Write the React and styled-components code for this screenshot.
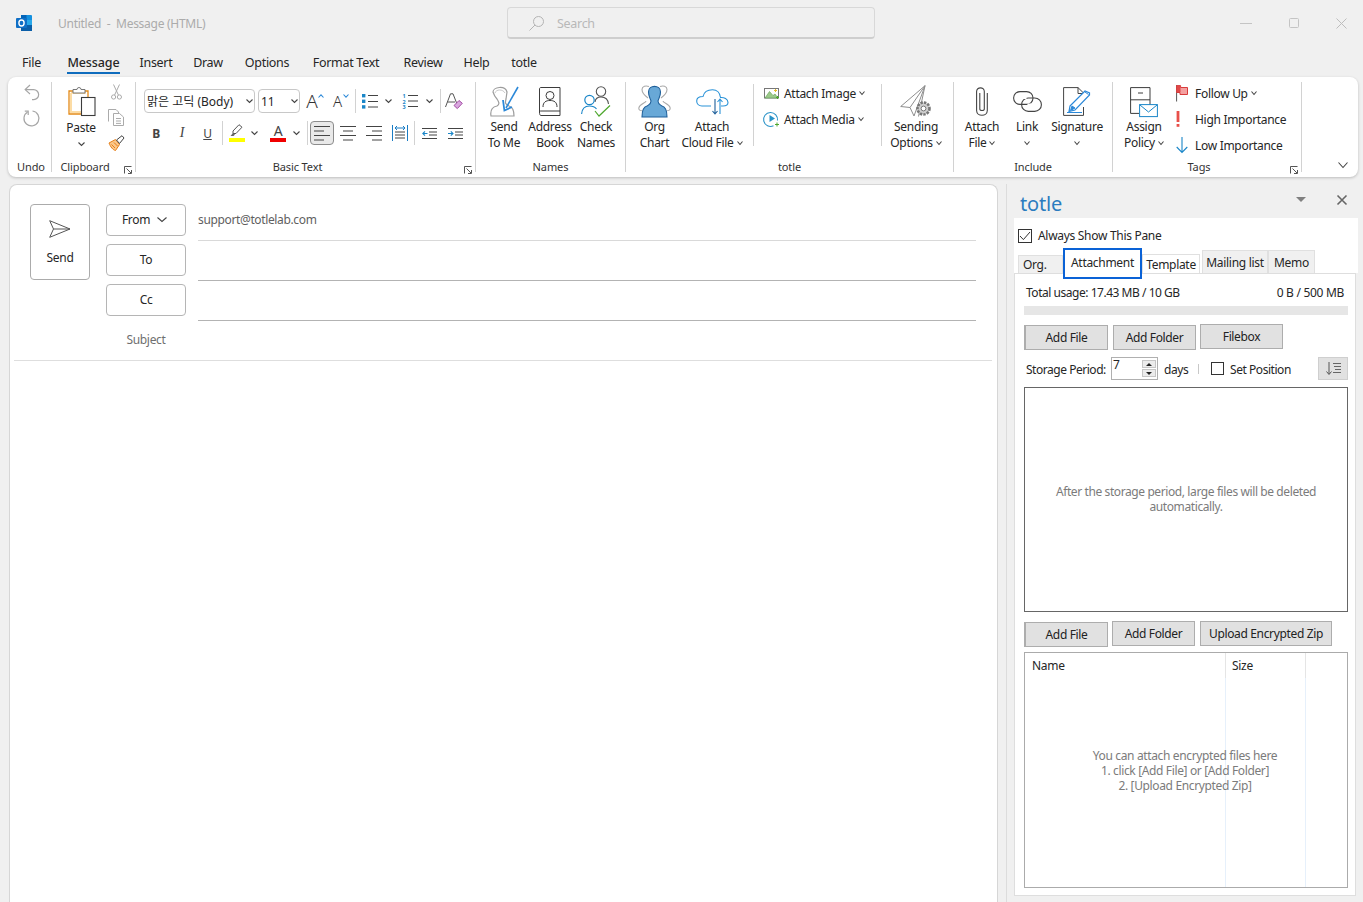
import React from 'react';
import styled, { createGlobalStyle } from 'styled-components';

const FONT = `"Noto Sans", "Noto Sans CJK KR", sans-serif`;

const Global = createGlobalStyle`
  html, body { margin: 0; padding: 0; height: 100%; overflow: hidden; background: #f0f0f0; }
  body { font-family: ${FONT}; font-size: 12px; letter-spacing: -0.3px; color: #262626; }
  * { box-sizing: border-box; }
  svg { display: block; flex: none; overflow: visible; }
`;

const Page = styled.div`width: 1363px; height: 902px; overflow: hidden; display: flex; flex-direction: column; background: #f0f0f0;`;

/* Title bar */
const TitleBar = styled.div`height: 47px; flex: none; display: flex; align-items: center; padding-left: 16px; padding-bottom: 1px;`;
const TitleLeft = styled.div`width: 491px; display: flex; align-items: center; gap: 26px;`;
const TitleText = styled.span`color: #ababab; white-space: pre; font-size: 12px; letter-spacing: -0.27px;`;
const SearchBox = styled.div`
  width: 368px; height: 32px; display: flex; align-items: center; gap: 13px; padding: 1px 0 0 21px;
  border: 1px solid #d8d8d8; border-bottom: 2px solid #cecece; border-radius: 4px; background: #f0f0f0; color: #b8b8b8; font-size: 12.5px;
`;
const WinControls = styled.div`margin-left: 365px; display: flex; align-items: center; gap: 37px;`;

/* Tabs */
const MenuBar = styled.div`height: 30px; flex: none; display: flex; padding-left: 10px; align-items: flex-start;`;
const MenuTab = styled.div`width: ${p => p.$w}px; display: flex; justify-content: center; font-size: 12.5px; color: #262626; padding-top: 7px;`;
const MenuLabel = styled.span`
  display: block; height: 20px; line-height: 18px; white-space: nowrap;
  font-weight: ${p => p.$active ? 500 : 400}; letter-spacing: ${p => p.$active ? '-0.1px' : '-0.3px'};
  border-bottom: 2px solid ${p => p.$active ? '#0f6cbd' : 'transparent'};
`;

/* Ribbon */
const Ribbon = styled.div`
  height: 100px; flex: none; margin: 0 5px 0 8px; padding: 5px 0; display: flex; background: #fff; border-radius: 8px;
  box-shadow: 0 1px 3px rgba(0,0,0,.22);
`;
const Group = styled.div`
  width: ${p => p.$w}px; flex: none; position: relative; display: flex; flex-direction: column;
  border-right: ${p => p.$plain ? 'none' : '1px solid #d2d2d2'};
`;
const GroupBody = styled.div`flex: 1; min-height: 0; display: flex; padding: 2px 0 0 ${p => p.$pl || 0}px; align-items: flex-start;`;
const GroupLabel = styled.div`
  height: 16px; line-height: 16px; margin-bottom: -3px; text-align: center; font-size: 11px; color: #333; white-space: nowrap; letter-spacing: -0.1px;
  padding: 0 ${p => p.$pr || 0}px 0 ${p => p.$pl || 0}px;
`;
const Launcher = styled.span`position: absolute; right: ${p => p.$r}px; bottom: -2px;`;
const LargeBtn = styled.div`
  width: ${p => p.$w}px; flex: none; display: flex; flex-direction: column; align-items: center; text-align: center; line-height: 16px; white-space: nowrap;
`;
const LargeIcon = styled.div`height: 35px; width: 100%; display: flex; justify-content: center; align-items: center;`;
const LargeText = styled.div`display: block; padding-top: ${p => p.$pt || 0}px;`;
const Caret = styled.span`display: inline-block; vertical-align: 2px; margin-left: 3px;`;
const CaretLine = styled.div`height: ${p => p.$h || 16}px; display: flex; align-items: center; justify-content: center;`;
const VSep = styled.div`width: 1px; height: ${p => p.$h}px; flex: none; background: #d2d2d2; margin: 0 ${p => p.$mr || 0}px 0 ${p => p.$ml || 0}px;`;
const SmallList = styled.div`display: flex; flex-direction: column; gap: 2px; width: ${p => p.$w}px; flex: none; padding-left: ${p => p.$pl}px; margin-top: -3px;`;
const SmallRow = styled.div`height: 24px; display: flex; align-items: center; white-space: nowrap;`;
const SmallIcon = styled.span`width: ${p => p.$w}px; flex: none; display: flex;`;
const ToolCol = styled.div`display: flex; flex-direction: column; align-items: center; gap: ${p => p.$gap || 8}px; width: ${p => p.$w}px; flex: none; margin-left: ${p => p.$ml || 0}px;`;
const ToolStack = styled.div`display: flex; flex-direction: column; width: 100%;`;
const ToolRow = styled.div`display: flex; align-items: center; height: ${p => p.$h}px; margin-top: ${p => p.$mt || 0}px; padding-left: ${p => p.$pl || 0}px;`;
const Combo = styled.div`
  width: ${p => p.$w}px; height: 24px; flex: none; display: flex; align-items: center; justify-content: space-between;
  padding: 0 1px 0 2px; margin-right: ${p => p.$mr || 0}px; border: 1px solid #c8c8c8; border-radius: 4px; white-space: nowrap; font-size: 12px; letter-spacing: 0;
`;
const Tool = styled.div`
  width: ${p => p.$w}px; height: 24px; flex: none; display: flex; align-items: center; gap: ${p => p.$gap || 0}px;
  justify-content: ${p => p.$pl ? 'flex-start' : 'center'}; padding-left: ${p => p.$pl || 0}px; margin-left: ${p => p.$ml || 0}px;
  border: ${p => p.$on ? '1px solid #8c8c8c' : 'none'}; border-radius: ${p => p.$on ? 4 : 0}px; background: ${p => p.$on ? '#e9e9e9' : 'transparent'};
`;
const FontA = styled.span`font-size: ${p => p.$s}px; line-height: 1; font-weight: 300; color: #333;`;
const TopDot = styled.span`align-self: flex-start; margin-top: 5px;`;
const FontMark = styled.span`
  font-family: ${p => p.$serif ? '"Liberation Serif", serif' : FONT}; font-size: ${p => p.$serif ? 14 : 12}px; color: #444;
  font-weight: ${p => p.$b ? 700 : 400}; font-style: ${p => p.$i ? 'italic' : 'normal'}; text-decoration: ${p => p.$u ? 'underline' : 'none'};
`;
const ColorBtn = styled.span`display: flex; flex-direction: column; align-items: center; width: 16px; height: 18px; justify-content: space-between;`;
const ColorBar = styled.span`display: block; width: 16px; height: 4px; background: ${p => p.$c};`;
const ColorA = styled.span`font-size: 14px; line-height: 14px; color: #444;`;
const CollapseBtn = styled.div`margin: auto 0 4px 36px;`;

/* Body */
const Body = styled.div`flex: 1; min-height: 0; display: flex; padding: 7px 0 0 9px;`;
const Compose = styled.div`
  width: 989px; flex: none; background: #fff; border: 1px solid #d6d6d6; border-bottom: none; border-radius: 8px 8px 0 0; padding-top: 19px;
`;
const Header = styled.div`display: grid; grid-template-columns: 60px 80px 774px; column-gap: 16px; padding-left: 20px; grid-auto-rows: 40px;`;
const SendBtn = styled.div`
  grid-row: 1 / span 2; height: 76px; border: 1px solid #ababab; border-radius: 4px; display: flex; flex-direction: column; align-items: center; padding-top: 15px; gap: 12px; line-height: 16px;
`;
const AddrBtn = styled.div`
  grid-column: 2; height: 32px; padding-bottom: 1px; border: 1px solid #b5b5b5; border-radius: 4px; display: flex; align-items: center; justify-content: center; gap: 7px; padding-right: ${p => p.$pr || 0}px;
`;
const Field = styled.div`
  grid-column: 3; margin-left: -4px; height: 37px; padding-bottom: 5px; display: flex; align-items: center; color: #5f5f5f; font-size: 12px;
  border-bottom: 1px solid ${p => p.$strong ? '#b3b3b3' : '#d9d9d9'}; letter-spacing: -0.36px;
`;
const SubjectRow = styled.div`grid-column: 2; height: 32px; line-height: 32px; text-align: center; color: #6f6f6f;`;
const ComposeRule = styled.div`height: 1px; background: #dedede; margin: -4px 5px 0 4px;`;

/* Side pane */
const Side = styled.div`flex: 1; min-width: 0; margin-left: 8px; border-left: 1px solid #dcdcdc; padding-left: 7px; display: flex; flex-direction: column;`;
const SideHead = styled.div`height: 34px; flex: none; display: flex; align-items: center; padding-left: 6px;`;
const SideTitle = styled.div`font-size: 20px; color: #2b7cbf; letter-spacing: -0.2px; padding-top: 4px;`;
const SideIcons = styled.div`margin-left: auto; display: flex; align-items: center; gap: 31px; padding-right: 16px; padding-bottom: 3px;`;
const SideTop = styled.div`height: 55px; flex: none; width: 344px; background: #fff; display: flex; flex-direction: column;`;
const AlwaysRow = styled.div`height: 32px; flex: none; display: flex; align-items: center; gap: 6px; padding: 3px 0 0 4px;`;
const Tick = styled.span`width: ${p => p.$s}px; height: ${p => p.$s}px; flex: none; border: 1px solid #333; background: #fff; display: flex; align-items: center; justify-content: center;`;
const TabStrip = styled.div`flex: 1; min-height: 0; display: flex; align-items: flex-end; padding-left: 4px; position: relative; z-index: 2;`;
const PaneTab = styled.div`
  height: ${p => p.$h}px; width: ${p => p.$w}px; flex: none; display: flex; align-items: center; justify-content: ${p => p.$pl ? 'flex-start' : 'center'}; margin-left: ${p => p.$ml || 0}px;
  padding-left: ${p => p.$pl || 0}px; background: ${p => p.$plain ? '#fff' : '#f0f0f0'}; border: 1px solid #e0e0e0; border-bottom: none; white-space: nowrap;
`;
const PaneTabOn = styled.div`
  width: 79px; height: 31px; flex: none; margin-bottom: -6px; padding-bottom: 3px; background: #fff; border: 2px solid #0a62d6; display: flex; align-items: center; justify-content: center; white-space: nowrap;
`;
const PaneBox = styled.div`
  width: 342px; height: 623px; flex: none; background: #fff; border: 1px solid #dedede; padding: 11px 7px 0 9px;
`;
const UsageRow = styled.div`height: 16px; line-height: 16px; display: flex; justify-content: space-between; padding: 0 4px 0 2px;`;
const TightText = styled.span`letter-spacing: -0.47px;`;
const UsageBar = styled.div`height: 9px; margin-top: 5px; background: #e6e6e6;`;
const BtnRow = styled.div`display: flex; align-items: flex-start; margin-top: ${p => p.$mt}px;`;
const PaneBtn = styled.div`
  width: ${p => p.$w}px; height: 25px; flex: none; margin: ${p => p.$mt || 0}px 0 0 ${p => p.$ml || 0}px; display: flex; align-items: center; justify-content: center;
  background: #e1e1e1; border: 1px solid #adadad; border-left-width: ${p => p.$thick ? 2 : 1}px; color: #222; letter-spacing: -0.35px;
`;
const StorageRow = styled.div`height: 23px; margin-top: 7px; display: flex; align-items: center; padding-left: 2px;`;
const StorageLabel = styled.span`width: 85px; flex: none; letter-spacing: -0.47px; padding-top: 1px;`;
const SpinBox = styled.div`
  width: 47px; height: 23px; flex: none; border: 1px solid #b0b0b0; display: flex; justify-content: space-between; padding: 0 1px; line-height: 14px;
`;
const Spinner = styled.div`width: 14px; display: flex; flex-direction: column; gap: 1px; padding-top: 2px;`;
const SpinPart = styled.div`height: 8px; background: #ececec; border: 1px solid #c6c6c6; display: flex; align-items: center; justify-content: center;`;
const DaysLabel = styled.span`width: 40px; flex: none; padding: 1px 0 0 6px; letter-spacing: -0.4px;`;
const ThinSep = styled.span`width: 1px; height: 10px; flex: none; background: #c8c8c8; margin-right: 12px;`;
const SetLabel = styled.span`margin-left: 6px; padding-top: 1px; letter-spacing: -0.45px;`;
const SortBtn = styled.div`width: 30px; height: 23px; margin-left: auto; background: #e1e1e1; border: 1px solid #cfcfcf; display: flex; align-items: center; justify-content: center;`;
const DropBox = styled.div`
  height: 225px; margin-top: 7px; border: 1px solid #666; display: flex; align-items: center; justify-content: center; text-align: center;
  color: #7b7b7b; line-height: 15px; padding: 0 22px 2px; letter-spacing: -0.4px;
`;
const FileList = styled.div`
  height: 236px; margin-top: 5px; border: 1px solid #ababab; position: relative; display: flex; flex-direction: column;
`;
const ListHead = styled.div`display: grid; grid-template-columns: 201px 80px 1fr; height: 25px; flex: none; line-height: 26px;`;
const HeadCell = styled.div`padding-left: ${p => p.$pl}px; border-right: ${p => p.$end ? 'none' : '1px solid #e5e5e5'};`;
const ListBody = styled.div`flex: 1; display: grid; grid-template-columns: 201px 80px 1fr;`;
const BodyCell = styled.div`border-right: ${p => p.$end ? 'none' : '1px solid #e6f0fb'};`;
const ListHint = styled.div`
  position: absolute; left: 0; right: 0; top: 95px; text-align: center; line-height: 15px; color: #7b7b7b; padding-right: 2px; letter-spacing: -0.36px;
`;

/* Icons */
const S = ({ w, h, children, sw = 1, stroke = '#444', fill = 'none' }) => (
  <svg width={w} height={h} viewBox={`0 0 ${w} ${h}`} fill={fill} stroke={stroke} strokeWidth={sw}>{children}</svg>
);
const Chev = ({ w = 7, h = 4, c = '#444' }) => (
  <S w={w} h={h} stroke={c} sw={1.1}><path d={`M0.5 0.5 L${w / 2} ${h - 0.5} L${w - 0.5} 0.5`} /></S>
);
const LauncherIcon = () => (
  <S w={8} h={8} stroke="#555"><path d="M0.5 7.5 V0.5 H7.5" /><path d="M2.5 2.5 L7 7 M7.5 4 V7.5 H4" /></S>
);
const Outlook = () => (
  <svg width="16" height="16" viewBox="0 0 16 16">
    <rect x="5" y="0" width="11" height="16" rx="1" fill="#1490df" />
    <rect x="5" y="0" width="5.5" height="5" fill="#0364b8" />
    <rect x="10.5" y="5" width="5.5" height="5.5" fill="#28a8ea" />
    <rect x="5" y="10" width="11" height="6" fill="#0a5ea8" />
    <rect x="0" y="3" width="11" height="10" rx="1" fill="#0f6fc6" />
    <ellipse cx="5.5" cy="8" rx="2.6" ry="3" fill="none" stroke="#fff" strokeWidth="1.4" />
  </svg>
);
const SearchIcon = () => (
  <S w={15} h={15} stroke="#b4b4b4"><circle cx="9.5" cy="5.5" r="5" /><path d="M6 9 L0.5 14.5" /></S>
);
const Minimize = () => <S w={12} h={1} stroke="#c4c4c4"><path d="M0 .5 H12" /></S>;
const Maximize = () => <S w={10} h={10} stroke="#c4c4c4"><rect x=".5" y=".5" width="9" height="9" rx="1" /></S>;
const CloseX = ({ c = '#bdbdbd', s = 11, sw = 1 }) => <S w={s} h={s} stroke={c} sw={sw}><path d={`M.5 .5 L${s - .5} ${s - .5} M${s - .5} .5 L.5 ${s - .5}`} /></S>;

const Undo = () => (
  <S w={16} h={17} stroke="#a6a6a6" sw={1.2}><path d="M6 1 L1.2 5.6 L6 10" /><path d="M1.5 5.6 H9.5 A5 5 0 0 1 9.8 15.6 H8" /></S>
);
const Redo = () => (
  <S w={17} h={18} stroke="#a6a6a6" sw={1.2}><path d="M3.6 3 A7.5 7.5 0 1 0 8.5 2" /><path d="M0.8 2.2 H4.2 V6" /></S>
);
const Paste = () => (
  <svg width="29" height="31" viewBox="0 0 29 31" fill="none">
    <path d="M2 5 H21 V28 H2 Z" fill="#fff" stroke="#e48a17" strokeWidth="1.3" />
    <path d="M4 7 H19 M4 7 V26 H14" stroke="#fcdca5" strokeWidth="2" />
    <path d="M6 7 V3.5 H10 A2 2 0 0 1 14 3.5 H18 V7 Z" fill="#fff" stroke="#777" />
    <rect x="14.5" y="11.5" width="13.5" height="18" fill="#fff" stroke="#3c3c3c" strokeWidth="1.1" />
  </svg>
);
const Scissors = () => (
  <S w={11} h={16} stroke="#ababab"><circle cx="2.6" cy="13" r="2.1" /><circle cx="8.4" cy="13" r="2.1" /><path d="M3.6 11 L8.5 0.5 M7.4 11 L2.5 0.5" /></S>
);
const Copy = () => (
  <S w={16} h={17} stroke="#ababab"><path d="M.5 12.5 V.5 H8 L10.5 3 V4" /><path d="M5.5 4.5 H11.5 L15.5 8 V16.5 H5.5 Z" fill="#fff" /><path d="M8 9.5 H13 M8 12 H13 M8 14.4 H13" /></S>
);
const Painter = () => (
  <svg width="17" height="16" viewBox="0 0 17 16" fill="none">
    <path d="M1 8 L7.5 4.5 L11.5 9.5 L7.5 15.5 C5 15 2.5 12 1 8 Z" fill="#fbc78a" stroke="#e67e17" />
    <path d="M3.5 9.5 L7 13 M6 7.5 L9.5 11" stroke="#e67e17" />
    <path d="M8.5 5 L11.5 8.5 L16 3 L14 .7 Z" fill="#fff" stroke="#444" />
  </svg>
);
const UpDot = ({ up }) => (
  <S w={6} h={4} stroke="#2b88d8" sw={1.1}><path d={up ? 'M.5 3.5 L3 .8 L5.5 3.5' : 'M.5 .5 L3 3.2 L5.5 .5'} /></S>
);
const Bullets = () => (
  <svg width="16" height="15" viewBox="0 0 16 15" fill="none">
    <rect x="0" y="0" width="3.4" height="3.4" fill="#1a86c8" /><rect x="0" y="5.6" width="3.4" height="3.4" fill="#1a86c8" /><rect x="0" y="11.2" width="3.4" height="3.4" fill="#1a86c8" />
    <path d="M6 1.5 H16 M6 7.5 H16 M6 13 H16" stroke="#444" />
  </svg>
);
const Numbers = () => (
  <svg width="16" height="16" viewBox="0 0 16 16" fill="none">
    <text x="0.5" y="5" fontSize="5.5" fontWeight="700" fill="#1a86c8" stroke="none">1</text>
    <text x="0.5" y="10.5" fontSize="5.5" fontWeight="700" fill="#1a86c8" stroke="none">2</text>
    <text x="0.5" y="16" fontSize="5.5" fontWeight="700" fill="#1a86c8" stroke="none">3</text>
    <path d="M6 2.5 H16 M6 8 H16 M6 13.5 H16" stroke="#444" />
  </svg>
);
const ClearFormat = () => (
  <svg width="18" height="17" viewBox="0 0 18 17" fill="none">
    <path d="M0.5 14 L5.5 .8 L8 .8 L12 11" stroke="#555" /><path d="M2.5 9 H10" stroke="#555" />
    <path d="M9 12.5 L14 7.5 L17.3 10.3 L12.3 15.6 Z" fill="#d9a7df" stroke="#a349a4" />
  </svg>
);
const Pen = () => (
  <svg width="16" height="12" viewBox="0 0 16 12" fill="none">
    <path d="M4 7 L10 .7 L13 3.2 L7 9.5 L4 9.5 Z" fill="#fff" stroke="#555" /><path d="M1.5 12 L4 9 L6 10.5 L4.5 12 Z" fill="#666" />
  </svg>
);
const AlignLines = ({ kind }) => {
  const d = {
    left: 'M0 .5 H16 M0 5 H10 M0 9.5 H16 M0 14 H10',
    center: 'M0 .5 H16 M3 5 H13 M0 9.5 H16 M3 14 H13',
    right: 'M0 .5 H16 M6 5 H16 M0 9.5 H16 M6 14 H16',
  }[kind];
  return <S w={16} h={15} stroke="#444"><path d={d} /></S>;
};
const Justify = () => (
  <svg width="16" height="16" viewBox="0 0 16 16" fill="none">
    <path d="M.5 0 V16 M15.5 0 V16 M3 3 H13 M5 1 L3 3 L5 5 M11 1 L13 3 L11 5" stroke="#1a7cc4" />
    <path d="M3 7 H13 M3 10 H13 M3 13 H13" stroke="#444" />
  </svg>
);
const Indent = ({ out }) => (
  <svg width="15" height="11" viewBox="0 0 15 11" fill="none">
    <path d="M0 .5 H15 M7 4 H15 M7 7 H15 M0 10.5 H15" stroke="#444" />
    {out
      ? <path d="M0.5 5.5 H5.5 M3 3.3 L.8 5.5 L3 7.7" stroke="#1a86c8" strokeWidth="1.1" />
      : <path d="M0 5.5 H5 M2.8 3.3 L5 5.5 L2.8 7.7" stroke="#1a86c8" strokeWidth="1.1" />}
  </svg>
);
const SendToMe = () => (
  <svg width="29" height="32" viewBox="0 0 29 32" fill="none">
    <path d="M3 6 C3 1 15 -1 17 6 L16 13 C15 17 15 18 19 20 C23 21 24 24 24 30 H1 C0 24 2 21 7 20 C10 18 9 16 7 13 C5 11 4 9 3 6 Z" fill="#fff" stroke="#9c9c9c" strokeWidth="1.2" />
    <path d="M5 7 C6 3 13 3 15 7" stroke="#c9c9c9" />
    <path d="M28 1 L16 22" stroke="#2b88d8" strokeWidth="1.6" />
    <path d="M13 14 L14.4 24.5 L22 21" fill="none" stroke="#2b88d8" strokeWidth="1.8" />
  </svg>
);
const AddressBook = () => (
  <svg width="22" height="29" viewBox="0 0 22 29" fill="none" stroke="#3c3c3c">
    <path d="M2 .5 H21 V28.5 H2 C.8 28.5 .5 27 .5 25 V2 C.5 1 1 .5 2 .5 Z" /><path d="M.5 25 C.5 24 1 24 2 24 H21" />
    <circle cx="11" cy="8.5" r="4" /><path d="M4 20 C4 15 7 13.5 11 13.5 C15 13.5 18 15 18 20" />
  </svg>
);
const CheckNames = () => (
  <svg width="30" height="31" viewBox="0 0 30 31" fill="none">
    <circle cx="20" cy="5.5" r="4.7" stroke="#555" strokeWidth="1.1" />
    <path d="M14 16 C14.5 12 17 11 20 11 C24 11 27 13 27.5 18" stroke="#555" strokeWidth="1.1" />
    <circle cx="8.5" cy="14" r="4.7" fill="#fff" stroke="#1a86c8" strokeWidth="1.2" />
    <path d="M.6 28 C1 22 4 20 8.5 20 C12 20 14 21 15.5 23" stroke="#1a86c8" strokeWidth="1.2" />
    <path d="M14 25 L18 30 L29 19.5" stroke="#4ea72e" strokeWidth="1.2" />
  </svg>
);
const OrgChart = () => (
  <svg width="33" height="33" viewBox="0 0 33 33" fill="none">
    <path d="M10 13 C6 10 4 7 4 4.5 C4 1 8 .3 11 1.5 M8 16 C8 18 1.5 19 .8 23 C.7 25 2 25.7 4.5 25.7" stroke="#aaa" strokeWidth="1.1" />
    <path d="M23 13 C27 10 29 7 29 4.5 C29 1 25 .3 22 1.5 M25 16 C25 18 31.5 19 32.2 23 C32.3 25 31 25.7 28.5 25.7" stroke="#aaa" strokeWidth="1.1" />
    <path d="M10.5 7 C10.5 -.5 22.5 -.5 22.5 7 C22.5 11 21 13 20 16 C20 19 21 19 24 21 C28 22 29 26 29 32 H4 C4 26 5 22 9 21 C12 19 13 19 13 16 C12 13 10.5 11 10.5 7 Z" fill="#68a8d7" stroke="#1f5f99" strokeWidth="1.1" />
  </svg>
);
const Cloud = () => (
  <svg width="33" height="26" viewBox="0 0 33 26" fill="none" stroke="#2b93d8" strokeWidth="1.1">
    <path d="M15 17 H6 C2.5 17 .7 14.5 .7 12 C.7 9 3 7.5 7 7.5 C8 3 12 .7 16.5 .7 C21 .7 24 4 24.5 8.5 C28 8.2 32 10 32 13.5 C32 16 30 17 27 17 H25" />
    <path d="M19 10 V25 M16.5 22 L19 25 L21.5 22" stroke="#1f5f99" /><path d="M24 25 V10 M21.5 13 L24 10 L26.5 13" stroke="#2b93d8" />
  </svg>
);
const AttachImg = () => (
  <svg width="16" height="11" viewBox="0 0 16 11" fill="none">
    <rect x=".5" y=".5" width="14" height="9.5" stroke="#777" />
    <path d="M1 10 L5.5 3.5 L9 7.5 L11 6 L14 10 Z" fill="#9cc98a" stroke="#60a050" strokeWidth=".6" />
    <path d="M11.5 1 V4 M10 2.5 H13" stroke="#e3bd2b" /><path d="M13.5 8 V11 M12 9.5 H15" stroke="#4ea72e" />
  </svg>
);
const AttachMedia = () => (
  <svg width="16" height="16" viewBox="0 0 16 16" fill="none">
    <path d="M13.5 9.5 A7 7 0 1 0 9.5 14.8" stroke="#2b93c8" strokeWidth="1.1" />
    <path d="M5.5 4 L11 7.5 L5.5 11 Z" fill="#2b93c8" /><path d="M13 11.5 V15.5 M11 13.5 H15" stroke="#4ea72e" />
  </svg>
);
const Sending = () => (
  <svg width="32" height="33" viewBox="0 0 32 33" fill="none" stroke="#8e8e8e">
    <path d="M25 .7 L.7 21.5 L10 22.5 L14 31 Z" fill="#fff" /><path d="M25 .7 L10 22.5 M25 .7 L18.5 31.5" />
    <circle cx="23.5" cy="23.5" r="6" fill="#cfcfcf" stroke="#777" strokeWidth="2.6" strokeDasharray="2.4 1.1" />
    <circle cx="23.5" cy="23.5" r="2.4" fill="#fff" stroke="#777" />
  </svg>
);
const Clip = () => (
  <S w={12} h={29} stroke="#444" sw={1.1}><path d="M3.8 6 V22 C3.8 24 8.3 24 8.3 22 V4.5 C8.3 -.4 .6 -.4 .6 4.5 V23.5 C.6 29.8 11.3 29.8 11.3 23.5 V6" /></S>
);
const LinkIcon = () => (
  <svg width="29" height="21" viewBox="0 0 29 21" fill="none" stroke="#444" strokeWidth="1.1">
    <rect x=".6" y=".6" width="19.4" height="12.8" rx="6.4" />
    <rect x="8.6" y="7" width="19.8" height="13.4" rx="6.7" />
    <path d="M10 6.9 H13.5 M14.5 13.5 H18" stroke="#fff" strokeWidth="2" />
  </svg>
);
const Signature = () => (
  <svg width="28" height="29" viewBox="0 0 28 29" fill="none">
    <path d="M.6 .6 H15 L20.5 6 V8 M15 .6 V6.5 H20.5 M20.5 20 V28.4 H.6 V.6" stroke="#444" />
    <path d="M7 19 L22 4 L26.5 6 L26.5 8 L12 23 L6 24.5 Z" fill="#fff" stroke="#2b88d8" strokeWidth="1.2" />
    <path d="M9 19 L12 21 L7.5 23.5 Z M22 5 L25.5 7.5" fill="#2b88d8" stroke="#2b88d8" />
    <path d="M4 25.5 H19" stroke="#2b88d8" />
  </svg>
);
const Policy = () => (
  <svg width="28" height="30" viewBox="0 0 28 30" fill="none">
    <path d="M.6 .6 H20 V19 M.6 .6 V26.4 H9 M.6 12.8 H20" stroke="#3c3c3c" />
    <path d="M8 6 H13" stroke="#3c3c3c" />
    <rect x="9.6" y="17.6" width="17.8" height="12" fill="#fff" stroke="#1a86c8" />
    <path d="M10 18 L18.5 25 L27 18" stroke="#1a86c8" />
  </svg>
);
const Flag = () => (
  <svg width="12" height="17" viewBox="0 0 12 17" fill="none">
    <path d="M.6 0 V16.5" stroke="#555" /><path d="M.6 .6 H4.6 V2.5 H11.5 V9.5 H4 V7.5 H.6 Z" fill="#f4a0a0" stroke="#d83b3b" />
    <rect x="1" y="1" width="3.5" height="6" fill="#e04848" />
  </svg>
);
const Important = () => (
  <svg width="4" height="16" viewBox="0 0 4 16"><rect x=".6" y="0" width="2.8" height="11" fill="#e8504a" /><rect x=".6" y="13" width="2.8" height="2.8" fill="#e8504a" /></svg>
);
const LowArrow = () => (
  <S w={12} h={16} stroke="#1a86c8" sw={1.1}><path d="M6 0 V15 M.7 10 L6 15.4 L11.3 10" /></S>
);
const Triangle = ({ c = '#808080', w = 10, h = 5, up }) => (
  <svg width={w} height={h} viewBox={`0 0 ${w} ${h}`}><path d={up ? `M0 ${h} L${w / 2} 0 L${w} ${h} Z` : `M0 0 L${w} 0 L${w / 2} ${h} Z`} fill={c} /></svg>
);
const SendPlane = () => (
  <S w={22} h={18} stroke="#555" sw={1}><path d="M.7 .7 L21 9 L.7 17.3 L4.5 9 Z" /><path d="M4.5 9 H21" /></S>
);
const Check = () => <S w={12} h={10} stroke="#333" sw={1}><path d="M1 5 L4.4 8.6 L11 1" /></S>;
const SortIcon = () => (
  <svg width="15" height="13" viewBox="0 0 15 13" fill="none"><path d="M3 0 V12 M.5 9.5 L3 12.5 L5.5 9.5" stroke="#555" /><path d="M7 1.5 H15 M8 4.5 H15 M9 7.5 H15 M7 10.5 H15" stroke="#666" /></svg>
);

const menu = [['File', 43], ['Message', 81, true], ['Insert', 44], ['Draw', 60], ['Options', 58], ['Format Text', 100], ['Review', 54], ['Help', 53], ['totle', 42]];
const SmallCaret = () => <Caret><Chev w={6} h={4} /></Caret>;

export default function App() {
  return (
    <Page>
      <Global />
      <TitleBar>
        <TitleLeft>
          <Outlook />
          <TitleText>{'Untitled  -  Message (HTML)'}</TitleText>
        </TitleLeft>
        <SearchBox><SearchIcon />Search</SearchBox>
        <WinControls><Minimize /><Maximize /><CloseX /></WinControls>
      </TitleBar>
      <MenuBar>
        {menu.map(([t, w, a]) => <MenuTab key={t} $w={w}><MenuLabel $active={a}>{t}</MenuLabel></MenuTab>)}
      </MenuBar>
      <Ribbon>
        <Group $w={44}>
          <GroupBody>
            <ToolCol $w={48} $gap={8}><Undo /><Redo /></ToolCol>
          </GroupBody>
          <GroupLabel $pl={3}>Undo</GroupLabel>
        </Group>
        <Group $w={84}>
          <GroupBody $pl={4}>
            <LargeBtn $w={50}>
              <LargeIcon><Paste /></LargeIcon>
              <LargeText $pt={1}>Paste</LargeText>
              <CaretLine $h={15}><Chev /></CaretLine>
            </LargeBtn>
            <ToolCol $w={26} $gap={9} $ml={-3}><Scissors /><Copy /><Painter /></ToolCol>
          </GroupBody>
          <GroupLabel $pr={17}>Clipboard</GroupLabel>
          <Launcher $r={3}><LauncherIcon /></Launcher>
        </Group>
        <Group $w={340}>
          <GroupBody>
            <ToolStack>
              <ToolRow $h={24} $pl={8} $mt={5}>
                <Combo $w={111} $mr={3}><span>맑은 고딕 (Body)</span><Chev /></Combo>
                <Combo $w={42} $mr={2}><span>11</span><Chev /></Combo>
                <Tool $w={26} $gap={0}><FontA $s={19}>A</FontA><TopDot><UpDot up /></TopDot></Tool>
                <Tool $w={26} $gap={1}><FontA $s={15}>A</FontA><TopDot><UpDot /></TopDot></Tool>
                <VSep $h={24} $ml={1} />
                <Tool $w={41} $pl={6} $gap={7}><Bullets /><Chev /></Tool>
                <Tool $w={40} $pl={5} $gap={8}><Numbers /><Chev /></Tool>
                <VSep $h={24} $ml={3} />
                <Tool $w={26}><ClearFormat /></Tool>
              </ToolRow>
              <ToolRow $h={24} $pl={7} $mt={8}>
                <Tool $w={26}><FontMark $b>B</FontMark></Tool>
                <Tool $w={26}><FontMark $i $serif>I</FontMark></Tool>
                <Tool $w={25}><FontMark $u>U</FontMark></Tool>
                <VSep $h={24} $ml={2} />
                <Tool $w={40} $pl={6} $gap={6}><ColorBtn><Pen /><ColorBar $c="#ffff00" /></ColorBtn><Chev /></Tool>
                <Tool $w={40} $pl={7} $gap={7}><ColorBtn><ColorA>A</ColorA><ColorBar $c="#f00000" /></ColorBtn><Chev /></Tool>
                <VSep $h={24} $ml={4} />
                <Tool $w={24} $ml={2} $on><AlignLines kind="left" /></Tool>
                <Tool $w={26} $ml={1}><AlignLines kind="center" /></Tool>
                <Tool $w={26}><AlignLines kind="right" /></Tool>
                <Tool $w={26}><Justify /></Tool>
                <VSep $h={24} $ml={1} $mr={1} />
                <Tool $w={26}><Indent out /></Tool>
                <Tool $w={26}><Indent /></Tool>
              </ToolRow>
            </ToolStack>
          </GroupBody>
          <GroupLabel $pr={16}>Basic Text</GroupLabel>
          <Launcher $r={3}><LauncherIcon /></Launcher>
        </Group>
        <Group $w={150}>
          <GroupBody $pl={5}>
            <LargeBtn $w={46}><LargeIcon><SendToMe /></LargeIcon><LargeText>Send<br />To Me</LargeText></LargeBtn>
            <LargeBtn $w={46}><LargeIcon><AddressBook /></LargeIcon><LargeText>Address<br />Book</LargeText></LargeBtn>
            <LargeBtn $w={46}><LargeIcon><CheckNames /></LargeIcon><LargeText>Check<br />Names</LargeText></LargeBtn>
          </GroupBody>
          <GroupLabel>Names</GroupLabel>
        </Group>
        <Group $w={328}>
          <GroupBody $pl={6}>
            <LargeBtn $w={45}><LargeIcon><OrgChart /></LargeIcon><LargeText>Org<br />Chart</LargeText></LargeBtn>
            <LargeBtn $w={70}><LargeIcon><Cloud /></LargeIcon><LargeText>Attach<br />Cloud File<SmallCaret /></LargeText></LargeBtn>
            <VSep $h={62} $ml={6} />
            <SmallList $w={127} $pl={10}>
              <SmallRow><SmallIcon $w={20}><AttachImg /></SmallIcon>Attach Image<SmallCaret /></SmallRow>
              <SmallRow><SmallIcon $w={20}><AttachMedia /></SmallIcon>Attach Media<SmallCaret /></SmallRow>
            </SmallList>
            <VSep $h={62} />
            <LargeBtn $w={68}><LargeIcon><Sending /></LargeIcon><LargeText>Sending<br />Options<SmallCaret /></LargeText></LargeBtn>
          </GroupBody>
          <GroupLabel>totle</GroupLabel>
        </Group>
        <Group $w={159}>
          <GroupBody $pl={7}>
            <LargeBtn $w={42}><LargeIcon><Clip /></LargeIcon><LargeText>Attach<br />File<SmallCaret /></LargeText></LargeBtn>
            <LargeBtn $w={48}><LargeIcon><LinkIcon /></LargeIcon><LargeText>Link</LargeText><CaretLine><Chev w={6} h={4} /></CaretLine></LargeBtn>
            <LargeBtn $w={52}><LargeIcon><Signature /></LargeIcon><LargeText>Signature</LargeText><CaretLine><Chev w={6} h={4} /></CaretLine></LargeBtn>
          </GroupBody>
          <GroupLabel>Include</GroupLabel>
        </Group>
        <Group $w={189}>
          <GroupBody $pl={6}>
            <LargeBtn $w={50}><LargeIcon><Policy /></LargeIcon><LargeText>Assign<br />Policy<SmallCaret /></LargeText></LargeBtn>
            <SmallList $w={132} $pl={7}>
              <SmallRow><SmallIcon $w={19}><Flag /></SmallIcon>Follow Up<SmallCaret /></SmallRow>
              <SmallRow><SmallIcon $w={19}><Important /></SmallIcon>High Importance</SmallRow>
              <SmallRow><SmallIcon $w={19}><LowArrow /></SmallIcon>Low Importance</SmallRow>
            </SmallList>
          </GroupBody>
          <GroupLabel $pr={16}>Tags</GroupLabel>
          <Launcher $r={3}><LauncherIcon /></Launcher>
        </Group>
        <Group $w={52} $plain>
          <CollapseBtn><Chev w={10} h={6} /></CollapseBtn>
        </Group>
      </Ribbon>
      <Body>
        <Compose>
          <Header>
            <SendBtn><SendPlane /><span>Send</span></SendBtn>
            <AddrBtn $pr={3}>From <Chev w={10} h={5} /></AddrBtn>
            <Field>support@totlelab.com</Field>
            <AddrBtn>To</AddrBtn>
            <Field $strong />
            <AddrBtn>Cc</AddrBtn>
            <Field $strong />
            <SubjectRow>Subject</SubjectRow>
          </Header>
          <ComposeRule />
        </Compose>
        <Side>
          <SideHead>
            <SideTitle>totle</SideTitle>
            <SideIcons><Triangle /><CloseX c="#666" s={10} sw={1.6} /></SideIcons>
          </SideHead>
          <SideTop>
            <AlwaysRow><Tick $s={14}><Check /></Tick>Always Show This Pane</AlwaysRow>
            <TabStrip>
              <PaneTab $w={45} $h={18} $pl={4}>Org.</PaneTab>
              <PaneTabOn>Attachment</PaneTabOn>
              <PaneTab $w={58} $h={19} $plain>Template</PaneTab>
              <PaneTab $w={66} $h={23} $ml={2}>Mailing list</PaneTab>
              <PaneTab $w={47} $h={23}>Memo</PaneTab>
            </TabStrip>
          </SideTop>
          <PaneBox>
            <UsageRow><TightText>Total usage: 17.43 MB / 10 GB</TightText><span>0 B / 500 MB</span></UsageRow>
            <UsageBar />
            <BtnRow $mt={9}>
              <PaneBtn $w={84} $mt={1} $thick>Add File</PaneBtn>
              <PaneBtn $w={83} $mt={1} $ml={5}>Add Folder</PaneBtn>
              <PaneBtn $w={83} $ml={4}>Filebox</PaneBtn>
            </BtnRow>
            <StorageRow>
              <StorageLabel>Storage Period:</StorageLabel>
              <SpinBox>
                <span>7</span>
                <Spinner>
                  <SpinPart><Triangle c="#222" w={6} h={3} up /></SpinPart>
                  <SpinPart><Triangle c="#222" w={6} h={3} /></SpinPart>
                </Spinner>
              </SpinBox>
              <DaysLabel>days</DaysLabel>
              <ThinSep />
              <Tick $s={13} />
              <SetLabel>Set Position</SetLabel>
              <SortBtn><SortIcon /></SortBtn>
            </StorageRow>
            <DropBox>After the storage period, large files will be deleted automatically.</DropBox>
            <BtnRow $mt={9}>
              <PaneBtn $w={84} $mt={1} $thick>Add File</PaneBtn>
              <PaneBtn $w={83} $ml={4}>Add Folder</PaneBtn>
              <PaneBtn $w={132} $ml={5}>Upload Encrypted Zip</PaneBtn>
            </BtnRow>
            <FileList>
              <ListHead>
                <HeadCell $pl={7}>Name</HeadCell>
                <HeadCell $pl={6}>Size</HeadCell>
                <HeadCell $pl={6} $end />
              </ListHead>
              <ListBody><BodyCell /><BodyCell /><BodyCell $end /></ListBody>
              <ListHint>You can attach encrypted files here<br />1. click [Add File] or [Add Folder]<br />2. [Upload Encrypted Zip]</ListHint>
            </FileList>
          </PaneBox>
        </Side>
      </Body>
    </Page>
  );
}
